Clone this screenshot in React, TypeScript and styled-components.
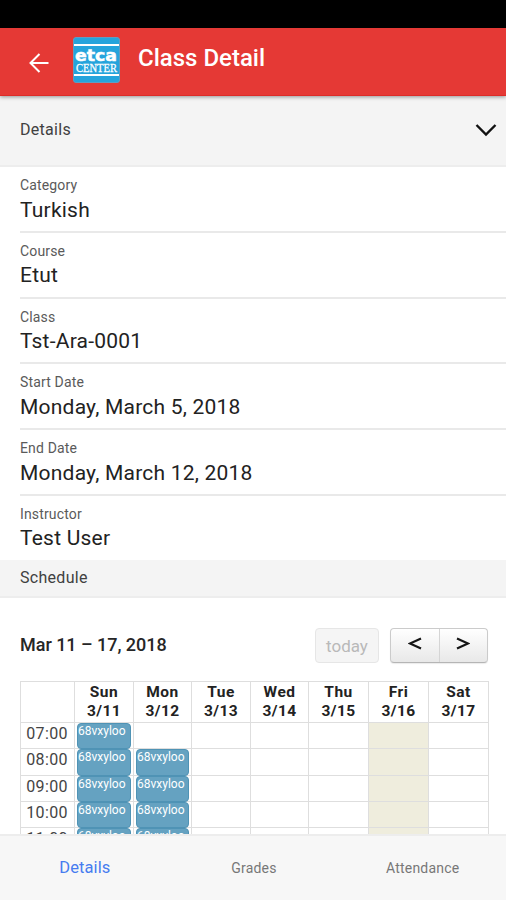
import React from 'react';
import styled, { createGlobalStyle } from 'styled-components';

const GlobalStyle = createGlobalStyle`
  * { box-sizing: border-box; }
  body { margin: 0; background: #fff; font-family: Roboto, sans-serif; }
`;

const Screen = styled.div`
  width: 506px;
  height: 900px;
  display: flex;
  flex-direction: column;
  overflow: hidden;
  background: #fff;
  color: #111;
`;

const StatusBar = styled.div`
  flex: none;
  height: 28px;
  background: #000;
`;

const Header = styled.header`
  flex: none;
  height: 68px;
  display: flex;
  align-items: flex-start;
  background: #e53935;
  border-bottom: 1px solid #dd2c28;
  box-shadow: 0 1px 4px rgba(0, 0, 0, 0.4);
  z-index: 1;
`;

const BackButton = styled.button`
  width: 22px;
  height: 22px;
  margin: 24px 0 0 28px;
  padding: 0;
  border: 0;
  background: none;
  svg { display: block; }
`;

const Logo = styled.div`
  width: 47px;
  height: 46px;
  margin: 9px 0 0 23px;
  border: 1px solid #5f9dc2;
  border-radius: 3px;
  overflow: hidden;
  background: #25a4dc;
  svg { display: block; }
`;

const Title = styled.h1`
  margin: 15px 0 0 18px;
  font-size: 24px;
  line-height: 30px;
  font-weight: 500;
  letter-spacing: 0;
  color: #fff;
`;

const SectionHead = styled.div<{ $height: number; $pad?: number }>`
  flex: none;
  height: ${p => p.$height}px;
  display: flex;
  align-items: center;
  justify-content: space-between;
  padding: 0 9px ${p => p.$pad ?? 0}px 20px;
  background: #f4f4f4;
  border-bottom: 2px solid #ededed;
  font-size: 16px;
  letter-spacing: 0.3px;
  color: #404040;
`;

const Fields = styled.dl`
  flex: none;
  height: 393px;
  margin: 0;
  padding-left: 20px;
  display: grid;
  grid-template-rows: repeat(5, 65.8px) 64px;
`;

const Field = styled.div`
  padding-top: 10px;
  border-bottom: 2px solid #e9e9e9;
  &:last-child { border-bottom: 0; }
`;

const Label = styled.dt`
  font-size: 14px;
  line-height: 17px;
  letter-spacing: 0.15px;
  color: #5a5a5a;
`;

const Value = styled.dd`
  margin: 1.5px 0 0;
  font-size: 21px;
  line-height: 28px;
  letter-spacing: 0.22px;
  color: #222;
`;

const Calendar = styled.section`
  flex: 1;
  min-height: 0;
  overflow: hidden;
  padding: 30px 18px 0 20px;
`;

const Toolbar = styled.div`
  height: 35px;
  display: flex;
  align-items: center;
`;

const Range = styled.h2`
  flex: 1;
  margin: 0;
  padding-bottom: 3px;
  font-size: 18px;
  font-weight: 500;
  letter-spacing: -0.03px;
  color: #262626;
`;

const TodayButton = styled.button`
  width: 64px;
  height: 35px;
  margin-right: 11px;
  padding: 0;
  border: 1px solid #e6e6e6;
  border-radius: 4px;
  background: #f5f5f5;
  color: #b9b9b9;
  font: 400 17px Roboto, sans-serif;
`;

const Pager = styled.div`
  display: flex;
  width: 98px;
  height: 35px;
  border: 1px solid #cbcbcb;
  border-bottom-color: #b5b5b5;
  border-radius: 4px;
  overflow: hidden;
  background: linear-gradient(#fff, #e8e8e8);
  box-shadow: 0 1px 1px rgba(0, 0, 0, 0.08);
`;

const PagerButton = styled.button`
  flex: 1;
  display: grid;
  justify-content: center;
  padding: 8px 0 0;
  border: 0;
  background: none;
  & + & { border-left: 1px solid #d5d5d5; }
`;

const Grid = styled.div`
  display: grid;
  grid-template-columns: 54px 59px 58px 59px 58px 60px 60px 60px;
  grid-template-rows: 41px repeat(5, 26.3px);
  width: 469px;
  margin-top: 18px;
  border-left: 1px solid #dedede;
  border-top: 1px solid #dedede;
`;

const Cell = styled.div<{ $today?: boolean }>`
  min-width: 0;
  border-right: 1px solid #dedede;
  border-bottom: 1px solid #dedede;
  background: ${p => (p.$today ? '#efeddd' : 'transparent')};
`;

const DayHead = styled(Cell)`
  padding-top: 1px;
  text-align: center;
  font-size: 15.5px;
  line-height: 18.5px;
  font-weight: 700;
  letter-spacing: 0.45px;
  color: #222;
`;

const TimeCell = styled(Cell)`
  padding-right: 6px;
  text-align: right;
  font-size: 16px;
  line-height: 22px;
  letter-spacing: 0.4px;
  color: #444;
`;

const Event = styled.div`
  height: 26.3px;
  margin: 0 2px;
  border: 1px solid #4f93b5;
  border-radius: 4px;
  background: #65a2c1;
  color: #fff;
  font-size: 12px;
  line-height: 15px;
  letter-spacing: 0;
  white-space: nowrap;
`;

const Tabs = styled.nav`
  flex: none;
  height: 66px;
  z-index: 1;
  display: grid;
  grid-template-columns: repeat(3, 1fr);
  border-top: 2px solid #ededed;
  background: #f7f7f7;
`;

const Tab = styled.button<{ $active?: boolean }>`
  padding: ${p => (p.$active ? '0 0 1px 1px' : '0 0 0 2px')};
  border: 0;
  background: none;
  font-family: Roboto, sans-serif;
  font-size: ${p => (p.$active ? 16.5 : 14)}px;
  letter-spacing: ${p => (p.$active ? 0.1 : 0.2)}px;
  color: ${p => (p.$active ? '#467cf0' : '#777')};
`;

const fields = [
  ['Category', 'Turkish'],
  ['Course', 'Etut'],
  ['Class', 'Tst-Ara-0001'],
  ['Start Date', 'Monday, March 5, 2018'],
  ['End Date', 'Monday, March 12, 2018'],
  ['Instructor', 'Test User'],
];
const days = ['Sun', 'Mon', 'Tue', 'Wed', 'Thu', 'Fri', 'Sat'];
const times = ['07:00', '08:00', '09:00', '10:00', '11:00'];

const hasEvent = (day: number, row: number) => day === 0 || (day === 1 && row > 0);

export default function App() {
  return (
    <>
      <GlobalStyle />
      <Screen>
        <StatusBar />
        <Header>
          <BackButton aria-label="Back">
            <svg width="22" height="22" viewBox="0 0 22 22" fill="none" stroke="#fff" strokeWidth="2">
              <path d="M20.500 11H3M11.500 2L2.500 11l9 9" />
            </svg>
          </BackButton>
          <Logo>
            <svg width="45" height="44" viewBox="0 0 45 44">
              <rect y="6" width="45" height="2" fill="#fff" />
              <rect y="36" width="45" height="2" fill="#fff" />
              <text x="1" y="23" textLength="42" lengthAdjust="spacingAndGlyphs" fontFamily="DejaVu Sans" fontWeight="700" fontSize="16.5" fill="#fff" stroke="#fff" strokeWidth=".5">etca</text>
              <text x="2" y="34" textLength="41" lengthAdjust="spacingAndGlyphs" fontFamily="Liberation Serif" fontSize="12" fill="#fff" stroke="#fff" strokeWidth=".3">CENTER</text>
            </svg>
          </Logo>
          <Title>Class Detail</Title>
        </Header>
        <SectionHead $height={71} $pad={2}>
          Details
          <svg width="22" height="14" viewBox="0 0 22 14" fill="none" stroke="#111" strokeWidth="2.4">
            <path d="M1.500 2l9.500 9.500L20.500 2" />
          </svg>
        </SectionHead>
        <Fields>
          {fields.map(([label, value]) => (
            <Field key={label}>
              <Label>{label}</Label>
              <Value>{value}</Value>
            </Field>
          ))}
        </Fields>
        <SectionHead $height={38} $pad={2}>Schedule</SectionHead>
        <Calendar>
          <Toolbar>
            <Range>Mar 11 – 17, 2018</Range>
            <TodayButton>today</TodayButton>
            <Pager>
              <PagerButton aria-label="Previous week">
                <svg width="14" height="13" viewBox="0 0 14 13" fill="none" stroke="#151515" strokeWidth="2.2">
                  <path d="M13 1.500L2 6.500l11 5" />
                </svg>
              </PagerButton>
              <PagerButton aria-label="Next week">
                <svg width="14" height="13" viewBox="0 0 14 13" fill="none" stroke="#151515" strokeWidth="2.2">
                  <path d="M1 1.500l11 5-11 5" />
                </svg>
              </PagerButton>
            </Pager>
          </Toolbar>
          <Grid>
            <Cell />
            {days.map((day, i) => (
              <DayHead key={day}>{day}<br />3/{11 + i}</DayHead>
            ))}
            {times.map((time, row) => (
              <React.Fragment key={time}>
                <TimeCell>{time}</TimeCell>
                {days.map((day, i) => (
                  <Cell key={day} $today={day === 'Fri'}>
                    {hasEvent(i, row) && <Event>68vxyloo</Event>}
                  </Cell>
                ))}
              </React.Fragment>
            ))}
          </Grid>
        </Calendar>
        <Tabs>
          <Tab $active>Details</Tab>
          <Tab>Grades</Tab>
          <Tab>Attendance</Tab>
        </Tabs>
      </Screen>
    </>
  );
}
